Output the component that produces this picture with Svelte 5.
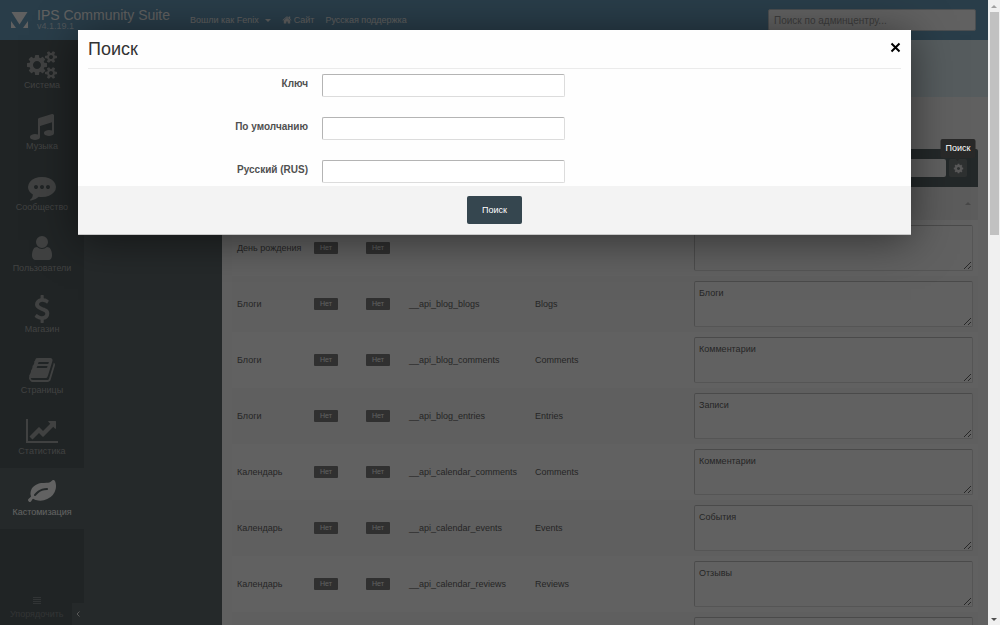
<script>
    const icons = {
        cogs: "M896 896q0-106-75-181t-181-75-181 75-75 181 75 181 181 75 181-75 75-181zm768 512q0-52-38-90t-90-38-90 38-38 90q0 53 37.5 90.5t90.5 37.5 90.5-37.5 37.5-90.5zm0-1024q0-52-38-90t-90-38-90 38-38 90q0 53 37.5 90.5t90.5 37.5 90.5-37.5 37.5-90.5zm-384 421v185q0 10-7 19.5t-16 10.5l-155 24q-11 35-32 76 34 48 90 115 7 11 7 20 0 12-7 19-23 30-82.5 89.5t-78.5 59.5q-11 0-21-7l-115-90q-37 19-77 31-11 108-23 155-7 24-30 24h-186q-11 0-20-7.5t-10-17.5l-23-153q-34-10-75-31l-118 89q-7 7-20 7-11 0-21-8-144-133-144-160 0-9 7-19 10-14 41-53t47-61q-23-44-35-82l-152-24q-10-1-17-9.5t-7-19.5v-185q0-10 7-19.5t16-10.5l155-24q11-35 32-76-34-48-90-115-7-11-7-20 0-12 7-20 22-30 82-89t79-59q11 0 21 7l115 90q34-18 77-32 11-108 23-154 7-24 30-24h186q11 0 20 7.5t10 17.5l23 153q34 10 75 31l118-89q8-7 20-7 11 0 21 8 144 133 144 160 0 8-7 19-12 16-42 54t-45 60q23 48 34 82l152 23q10 2 17 10.5t7 19.5zm640 533v140q0 16-149 31-12 27-30 52 51 113 51 138 0 4-4 7-122 71-124 71-8 0-46-47t-52-68q-20 2-30 2t-30-2q-14 21-52 68t-46 47q-2 0-124-71-4-3-4-7 0-25 51-138-18-25-30-52-149-15-149-31v-140q0-16 149-31 13-29 30-52-51-113-51-138 0-4 4-7 4-2 35-20t59-34 30-16q8 0 46 46.5t52 67.5q20-2 30-2t30 2q51-71 92-112l6-2q4 0 124 70 4 3 4 7 0 25-51 138 17 23 30 52 149 15 149 31zm0-1024v140q0 16-149 31-12 27-30 52 51 113 51 138 0 4-4 7-122 71-124 71-8 0-46-47t-52-68q-20 2-30 2t-30-2q-14 21-52 68t-46 47q-2 0-124-71-4-3-4-7 0-25 51-138-18-25-30-52-149-15-149-31v-140q0-16 149-31 13-29 30-52-51-113-51-138 0-4 4-7 4-2 35-20t59-34 30-16q8 0 46 46.5t52 67.5q20-2 30-2t30 2q51-71 92-112l6-2q4 0 124 70 4 3 4 7 0 25-51 138 17 23 30 52 149 15 149 31z",
        music: "M1664 224v1120q0 50-34 89t-86 60.5-103.5 32-96.5 10.5-96.5-10.5-103.5-32-86-60.5-34-89 34-89 86-60.5 103.5-32 96.5-10.5q105 0 192 39v-537l-768 237v709q0 50-34 89t-86 60.5-103.5 32-96.5 10.5-96.5-10.5-103.5-32-86-60.5-34-89 34-89 86-60.5 103.5-32 96.5-10.5q105 0 192 39v-967q0-31 19-56.5t49-35.5l832-256q12-4 28-4 40 0 68 28t28 68z",
        commenting: "M640 896q0-53-37.5-90.5t-90.5-37.5-90.5 37.5-37.5 90.5 37.5 90.5 90.5 37.5 90.5-37.5 37.5-90.5zm384 0q0-53-37.5-90.5t-90.5-37.5-90.5 37.5-37.5 90.5 37.5 90.5 90.5 37.5 90.5-37.5 37.5-90.5zm384 0q0-53-37.5-90.5t-90.5-37.5-90.5 37.5-37.5 90.5 37.5 90.5 90.5 37.5 90.5-37.5 37.5-90.5zm384 0q0 174-120 321.5t-326 233-450 85.5q-110 0-211-18-173 173-435 229-52 10-86 13-12 1-22-6t-13-18q-4-15 20-37 5-5 23.5-21.5t25.5-23.5 23.5-25.5 24-31.5 20.5-37 20-48 14.5-57.5 12.5-72.5q-146-90-229.5-216.5t-83.5-269.5q0-174 120-321.5t326-233 450-85.5 450 85.5 326 233 120 321.5z",
        user: "M1536 1399q0 109-62.5 187t-150.5 78h-854q-88 0-150.5-78t-62.5-187q0-85 8.5-160.5t31.5-152 58.5-131 94-89 134.5-34.5q131 128 313 128t313-128q76 0 134.5 34.5t94 89 58.5 131 31.5 152 8.5 160.5zm-256-887q0 159-112.5 271.5t-271.5 112.5-271.5-112.5-112.5-271.5 112.5-271.5 271.5-112.5 271.5 112.5 112.5 271.5z",
        dollar: "M1362 1185q0 153-99.5 263.5t-258.5 136.5v175q0 14-9 23t-23 9h-135q-13 0-22.5-9.5t-9.5-22.5v-175q-66-9-127.5-31t-101.5-44.5-74-48-46.5-37.5-17.5-18q-17-21-2-41l103-135q7-10 23-12 15-2 24 9l2 2q113 99 243 125 37 8 74 8 81 0 142.5-43t61.5-122q0-28-15-53t-33.5-42-58.5-37.5-66-32-80-32.5q-39-16-61.5-25t-61.5-26.5-62.5-31-56.5-35.5-53.5-42.5-43.5-49-35.5-58-21-66.5-8.5-78q0-138 98-242t255-134v-180q0-13 9.5-22.5t22.5-9.5h135q14 0 23 9t9 23v176q57 6 110.5 23t87 33.5 63.5 37.5 39 29 15 14q17 18 5 38l-81 146q-8 15-23 16-14 3-27-7-3-3-14.5-12t-39-26.5-58.5-32-74.5-26-85.5-11.5q-95 0-155 43t-60 111q0 26 8.5 48t29.5 41.5 39.5 33 56 31 60.5 27 70 27.5q53 20 81 31.5t76 35 75.5 42.5 62 50 53 63.5 31.5 76.5 13 94z",
        book: "M1703 478q40 57 18 129l-275 906q-19 64-76.5 107.5t-122.5 43.5h-923q-77 0-148.5-53.5t-99.5-131.5q-24-67-2-127 0-4 3-27t4-37q1-8-3-21.5t-3-19.5q2-11 8-21t16.5-23.5 16.5-23.5q23-38 45-91.5t30-91.5q3-10 .5-30t-.5-28q3-11 17-28t17-23q21-36 42-92t25-90q1-9-2.5-32t.5-28q4-13 22-30.5t22-22.5q19-26 42.5-84.5t27.5-96.5q1-8-3-25.5t-2-26.5q2-8 9-18t18-23 17-21q8-12 16.5-30.5t15-35 16-36 19.5-32 26.5-23.5 36-11.5 47.5 5.5l-1 3q38-9 51-9h761q74 0 114 56t18 130l-274 906q-36 119-71.5 153.5t-128.5 34.5h-869q-27 0-38 15-11 16-1 43 24 70 144 70h923q29 0 56-15.5t35-41.5l300-987q7-22 5-57 38 15 59 43zm-1064 2q-4 13 2 22.5t20 9.5h608q13 0 25.5-9.5t16.5-22.5l21-64q4-13-2-22.5t-20-9.5h-608q-13 0-25.5 9.5t-16.5 22.5zm-83 256q-4 13 2 22.5t20 9.5h608q13 0 25.5-9.5t16.5-22.5l21-64q4-13-2-22.5t-20-9.5h-608q-13 0-25.5 9.5t-16.5 22.5z",
        chart: "M2048 1536v128h-2048v-1536h128v1408h1920zm-128-1248v435q0 21-19.5 29.5t-35.5-7.5l-121-121-633 633q-10 10-23 10t-23-10l-233-233-416 416-192-192 585-585q10-10 23-10t23 10l233 233 464-464-121-121q-16-16-7.5-35.5t29.5-19.5h435q14 0 23 9t9 23z",
        leaf: "M1280 704q0-26-19-45t-45-19q-172 0-318 49.5t-259.5 134-235.5 219.5q-19 21-19 45 0 26 19 45t45 19q24 0 45-19 27-24 74-71t67-66q137-124 268.5-176t313.5-52q26 0 45-19t19-45zm512-198q0 95-20 193-46 224-184.5 383t-357.5 268q-214 108-438 108-148 0-286-47-15-5-88-42t-96-37q-16 0-39.5 32t-45 70-52.5 70-60 32q-43 0-63.5-17.5t-45.5-59.5q-2-4-6-11t-5.5-10-3-9.5-1.5-13.5q0-35 31-73.5t68-65.5 68-56 31-48q0-4-14-38t-16-44q-9-51-9-104 0-115 43.5-220t119-184.5 170.5-139 204-95.5q55-18 145-25.5t179.5-9 178.5-6 163.5-24 113.5-56.5l29.5-29.5 29.5-28 27-20 36.5-16 43.5-4.5q39 0 70.5 46t47.5 112 24 124 8 96z",
        home: "M1472 992v480q0 26-19 45t-45 19h-384v-384h-256v384h-384q-26 0-45-19t-19-45v-480q0-1 .5-3t.5-3l575-474 575 474q1 2 1 6zm223-69l-62 74q-8 9-21 11h-3q-13 0-21-7l-692-577-692 577q-12 8-24 7-13-2-21-11l-62-74q-8-10-7-23.5t11-21.5l719-599q32-26 76-26t76 26l244 204v-195q0-14 9-23t23-9h192q14 0 23 9t9 23v408l219 182q10 8 11 21.5t-7 23.5z",
        cog: "M1152 896q0-106-75-181t-181-75-181 75-75 181 75 181 181 75 181-75 75-181zm512-109v222q0 12-8 23t-20 13l-185 28q-19 54-39 91 35 50 107 138 10 12 10 25t-9 23q-27 37-99 108t-94 71q-12 0-26-9l-138-108q-44 23-91 38-16 136-29 186-7 28-36 28h-222q-14 0-24.5-8.5t-11.5-21.5l-28-184q-49-16-90-37l-141 107q-10 9-25 9-14 0-25-11-126-114-165-168-7-10-7-23 0-12 8-23 15-21 51-66.5t54-70.5q-27-50-41-99l-183-27q-13-2-21-12.5t-8-23.5v-222q0-12 8-23t19-13l186-28q14-46 39-92-40-57-107-138-10-12-10-24 0-10 9-23 26-36 98.5-107.5t94.5-71.5q13 0 26 10l138 107q44-23 91-38 16-136 29-186 7-28 36-28h222q14 0 24.5 8.5t11.5 21.5l28 184q49 16 90 37l142-107q9-9 24-9 13 0 25 10 129 119 165 170 7 8 7 22 0 12-8 23-15 21-51 66.5t-54 70.5q26 50 41 98l183 28q13 2 21 12.5t8 23.5z",
    };

    const menu = [
        { name: "Система", icon: "cogs", width: 1920 },
        { name: "Музыка", icon: "music", width: 1792 },
        { name: "Сообщество", icon: "commenting", width: 1792 },
        { name: "Пользователи", icon: "user", width: 1792 },
        { name: "Магазин", icon: "dollar", width: 1792 },
        { name: "Страницы", icon: "book", width: 1792 },
        { name: "Статистика", icon: "chart", width: 2048 },
        { name: "Кастомизация", icon: "leaf", width: 1792, active: true },
    ];

    const words = [
        { app: "День рождения", key: "", original: "", value: "" },
        { app: "Блоги", key: "__api_blog_blogs", original: "Blogs", value: "Блоги" },
        { app: "Блоги", key: "__api_blog_comments", original: "Comments", value: "Комментарии" },
        { app: "Блоги", key: "__api_blog_entries", original: "Entries", value: "Записи" },
        { app: "Календарь", key: "__api_calendar_comments", original: "Comments", value: "Комментарии" },
        { app: "Календарь", key: "__api_calendar_events", original: "Events", value: "События" },
        { app: "Календарь", key: "__api_calendar_reviews", original: "Reviews", value: "Отзывы" },
        { app: "", key: "", original: "", value: "", blank: true },
    ];

    const fields = [
        { id: "word_key", label: "Ключ" },
        { id: "word_default", label: "По умолчанию" },
        { id: "word_custom", label: "Русский (RUS)" },
    ];

    let open = $state(true);
</script>

<svelte:head>
    <title>IPS Community Suite</title>
</svelte:head>

<div class="window">
    <div class="page">
        <header>
            <a class="brand" href="#home">
                <svg class="logo" viewBox="0 0 17 16" width="17" height="16" aria-hidden="true">
                    <path d="M0.500 0h16L8.500 12.500z" />
                    <path d="M0 9L5 16H0zM17 9L12 16H17z" />
                </svg>
                <span class="name">
                    <strong>IPS Community Suite</strong>
                    <small>v4.1.19.1</small>
                </span>
            </a>
            <nav class="links">
                <a href="#account">Вошли как Fenix <i class="caret"></i></a>
                <a href="#site">
                    <svg viewBox="0 0 1792 1792" width="10" height="10" aria-hidden="true">
                        <path d={icons.home} />
                    </svg>
                    Сайт
                </a>
                <a href="#support">Русская поддержка</a>
            </nav>
            <input
                class="acp-search"
                type="search"
                placeholder="Поиск по админцентру..."
                aria-label="Поиск по админцентру"
            />
        </header>

        <div class="columns">
            <nav class="sidebar">
                {#each menu as item}
                    <a class="item" class:active={item.active} href="#{item.icon}">
                        <svg viewBox="0 0 {item.width} 1792" height="28" aria-hidden="true">
                            <path d={icons[item.icon]} />
                        </svg>
                        {item.name}
                    </a>
                {/each}
                <div class="bottom">
                    <button class="reorder" type="button">
                        <svg viewBox="0 0 8 7" width="8" height="7" aria-hidden="true">
                            <path d="M0 0h8v1H0zM0 2h8v1H0zM0 4h8v1H0zM0 6h8v1H0z" />
                        </svg>
                        Упорядочить
                    </button>
                    <button class="collapse" type="button" aria-label="Свернуть">
                        <svg viewBox="0 0 4 6" width="4" height="6" aria-hidden="true">
                            <path d="M3.500 0.500L1 3l2.500 2.500" />
                        </svg>
                    </button>
                </div>
            </nav>
            <div class="submenu"></div>
            <main>
                <div class="banner"></div>
                <div class="content">
                    <div class="toolbar">
                        <input type="text" aria-label="Фильтр" />
                        <div class="tool">
                            <button type="button" aria-label="Поиск" onclick={() => (open = true)}>
                                <svg viewBox="0 0 1792 1792" width="11" height="11" aria-hidden="true">
                                    <path d={icons.cog} />
                                </svg>
                            </button>
                            <span class="tooltip">Поиск</span>
                        </div>
                    </div>
                    <div class="sort"><i class="caret up"></i></div>
                    <table>
                        <colgroup>
                            <col class="app" />
                            <col class="flag" />
                            <col class="flag-last" />
                            <col class="key" />
                            <col class="original" />
                            <col />
                        </colgroup>
                        <tbody>
                            {#each words as word}
                                <tr>
                                    <td>{word.app}</td>
                                    <td>{#if !word.blank}<span class="badge">Нет</span>{/if}</td>
                                    <td>{#if !word.blank}<span class="badge">Нет</span>{/if}</td>
                                    <td>{word.key}</td>
                                    <td>{word.original}</td>
                                    <td><textarea aria-label="Перевод" value={word.value}></textarea></td>
                                </tr>
                            {/each}
                        </tbody>
                    </table>
                </div>
            </main>
        </div>

        {#if open}
            <div class="overlay">
                <form class="dialog" role="dialog" aria-labelledby="dialog-title" onsubmit={(e) => e.preventDefault()}>
                    <div class="dialog-head">
                        <h3 id="dialog-title">Поиск</h3>
                        <button type="button" aria-label="Закрыть" onclick={() => (open = false)}>
                            <svg viewBox="0 0 11 11" width="11" height="11" aria-hidden="true">
                                <path d="M1.500 1.500l8 8M9.500 1.500l-8 8" />
                            </svg>
                        </button>
                    </div>
                    <div class="fields">
                        {#each fields as field}
                            <label for={field.id}>{field.label}</label>
                            <input id={field.id} type="text" />
                        {/each}
                    </div>
                    <div class="dialog-foot">
                        <button type="submit">Поиск</button>
                    </div>
                </form>
            </div>
        {/if}
    </div>

    <div class="scrollbar" aria-hidden="true">
        <i class="arrow"></i>
        <div class="track"><div class="thumb"></div></div>
        <i class="arrow down"></i>
    </div>
</div>

<style>
    :global(body) {
        margin: 0;
        font-family: "Liberation Sans", Arial, sans-serif;
        font-size: 9px;
        line-height: 12px;
    }

    * {
        box-sizing: border-box;
    }

    a {
        color: inherit;
        text-decoration: none;
    }

    button,
    input,
    textarea {
        font: inherit;
        margin: 0;
    }

    button {
        padding: 0;
        border: none;
        background: none;
        color: inherit;
        cursor: pointer;
    }

    svg {
        display: block;
        fill: currentColor;
    }

    .window {
        display: flex;
        height: 100vh;
        overflow: hidden;
    }

    .page {
        position: relative;
        flex: 1;
        min-width: 0;
        display: flex;
        flex-direction: column;
        overflow: hidden;
        background: #f0f0f0;
    }

    /* top bar */
    header {
        display: flex;
        align-items: center;
        flex: none;
        height: 40px;
        padding: 0 12px 0 11px;
        background: #6698b6;
        color: #f0f0f0;
    }

    .brand {
        display: flex;
        align-items: center;
        gap: 9px;
    }

    .name {
        display: flex;
        flex-direction: column;
        padding-bottom: 2px;
    }

    .name strong {
        font-size: 14px;
        font-weight: normal;
        line-height: 14px;
    }

    .name small {
        font-size: 9px;
        line-height: 8px;
        color: #c4d4de;
    }

    .links {
        display: flex;
        gap: 11px;
        flex: 1;
        margin-left: 20px;
        color: #ececec;
    }

    .links a {
        display: flex;
        align-items: center;
        gap: 2px;
    }

    .caret {
        border: 3px solid transparent;
        border-top-color: currentColor;
        border-bottom: none;
        margin-left: 4px;
    }

    .caret.up {
        border-top: none;
        border-bottom: 3px solid #b4b4b4;
    }

    .acp-search {
        width: 208px;
        height: 22px;
        padding: 0 5px;
        border: 1px solid #bcc4c8;
        border-radius: 2px;
        background: #f2f2f2;
        appearance: none;
        font-size: 10px;
    }

    .acp-search::placeholder {
        color: #999;
    }

    .columns {
        display: flex;
        flex: 1;
        min-height: 0;
    }

    /* main menu */
    .sidebar {
        display: flex;
        flex-direction: column;
        flex: none;
        width: 84px;
        padding-top: 1px;
        background: #525a5c;
        color: #a0a4a4;
    }

    .item {
        display: flex;
        flex-direction: column;
        align-items: center;
        padding: 10px 0 11px;
    }

    .item.active {
        background: #5d6869;
        color: #f4f4f4;
    }

    .bottom {
        display: flex;
        justify-content: space-between;
        align-items: flex-end;
        margin-top: auto;
        padding-left: 10px;
        color: #7c8284;
    }

    .reorder {
        display: flex;
        flex-direction: column;
        align-items: center;
        gap: 4px;
        padding-bottom: 5px;
    }

    .collapse {
        display: flex;
        align-items: center;
        justify-content: center;
        width: 12px;
        height: 22px;
        background: #5d6869;
        color: #dcdcdc;
    }

    .collapse svg {
        fill: none;
        stroke: currentColor;
    }

    .submenu {
        flex: none;
        width: 138px;
        background: #5d6869;
    }

    /* content */
    main {
        flex: 1;
        min-width: 0;
    }

    .banner {
        height: 57px;
        background: #d6e6ec;
    }

    .content {
        padding: 52px 10px 0;
    }

    .toolbar {
        display: flex;
        justify-content: flex-end;
        align-items: center;
        gap: 3px;
        height: 38px;
        padding-right: 11px;
        border-radius: 2px 2px 0 0;
        background: #586466;
    }

    .toolbar input {
        width: 200px;
        height: 18px;
        border: none;
        border-radius: 2px;
        background: #f0f0f0;
    }

    .tool {
        position: relative;
    }

    .tool button {
        display: flex;
        align-items: center;
        justify-content: center;
        width: 18px;
        height: 18px;
        border-radius: 2px;
        background: #747a7c;
        color: #dcdcdc;
    }

    .tooltip {
        position: absolute;
        left: 50%;
        bottom: calc(100% + 1px);
        z-index: 20;
        transform: translateX(-50%);
        padding: 3px 5px 4px;
        border-radius: 2px;
        background: #282828;
        color: #fff;
        line-height: 12px;
    }

    .tooltip::after {
        content: "";
        position: absolute;
        left: 50%;
        top: 100%;
        margin-left: -3px;
        border: 3px solid transparent;
        border-top-color: #282828;
        border-bottom: none;
    }

    .sort {
        display: flex;
        justify-content: flex-end;
        align-items: center;
        height: 33px;
        padding-right: 7px;
        background: #e6e6e6;
    }

    table {
        width: 100%;
        border-collapse: collapse;
        table-layout: fixed;
        color: #606060;
    }

    col.app {
        width: 77px;
    }

    col.flag {
        width: 52px;
    }

    col.flag-last {
        width: 43px;
    }

    col.key {
        width: 126px;
    }

    col.original {
        width: 159px;
    }

    tr {
        height: 56px;
        background: #f3f3f3;
    }

    tr:nth-child(even) {
        background: #ededed;
    }

    td {
        padding: 0 5px;
        white-space: nowrap;
    }

    .badge {
        display: inline-block;
        width: 24px;
        border-radius: 1px;
        background: #787878;
        color: #f0f0f0;
        font-size: 7px;
        line-height: 12px;
        text-align: center;
        vertical-align: middle;
    }

    textarea {
        display: block;
        width: 100%;
        height: 46px;
        padding: 5px 4px;
        border: 1px solid #d4d4d4;
        border-top-color: #b8b8b8;
        border-left-color: #c0c0c0;
        border-radius: 2px;
        background: #f3f3f3;
        color: #606060;
    }

    /* search dialog */
    .overlay {
        position: absolute;
        inset: 0;
        z-index: 10;
        padding: 30px 77px 0 78px;
        background: rgba(0, 0, 0, 0.6);
    }

    .dialog {
        background: #fefefe;
        box-shadow: 0 5px 40px rgba(0, 0, 0, 0.5);
    }

    .dialog-head {
        display: flex;
        justify-content: space-between;
        align-items: flex-start;
        height: 39px;
        margin: 0 10px;
        padding-top: 9px;
        border-bottom: 1px solid #ebebeb;
    }

    h3 {
        margin: 0;
        color: #333;
        font-size: 18px;
        font-weight: normal;
        line-height: 20px;
    }

    .dialog-head button {
        padding: 3px 0;
        color: #000;
    }

    .dialog-head button svg {
        fill: none;
        stroke: currentColor;
        stroke-width: 2;
    }

    .fields {
        display: grid;
        grid-template-columns: 230px minmax(0, 243px);
        column-gap: 14px;
        row-gap: 20px;
        padding: 5px 0 3px;
    }

    .fields label {
        color: #505050;
        font-size: 10px;
        font-weight: bold;
        line-height: 20px;
        text-align: right;
    }

    .fields input {
        height: 23px;
        padding: 0 5px;
        border: 1px solid #dcdcdc;
        border-top-color: #b4b4b4;
        border-left-color: #b4b4b4;
        border-radius: 2px;
        background: #fff;
    }

    .dialog-foot {
        display: flex;
        justify-content: center;
        padding: 10px;
        border-bottom: 1px solid #c8c8c8;
        background: #f3f3f3;
    }

    .dialog-foot button {
        height: 28px;
        padding: 0 15px;
        border-radius: 2px;
        background: #35464f;
        color: #fff;
    }

    /* page scrollbar */
    .scrollbar {
        display: flex;
        flex-direction: column;
        align-items: center;
        flex: none;
        width: 12px;
        padding: 5px 0 4px;
        background: #f0f0f0;
    }

    .arrow {
        border: 3px solid transparent;
        border-top: none;
        border-bottom-color: #a0a0a0;
    }

    .arrow.down {
        border-top: 3px solid #505050;
        border-bottom: none;
    }

    .track {
        flex: 1;
        width: 9px;
        margin: 4px 0;
    }

    .thumb {
        height: 37%;
        background: #c1c1c1;
    }
</style>
